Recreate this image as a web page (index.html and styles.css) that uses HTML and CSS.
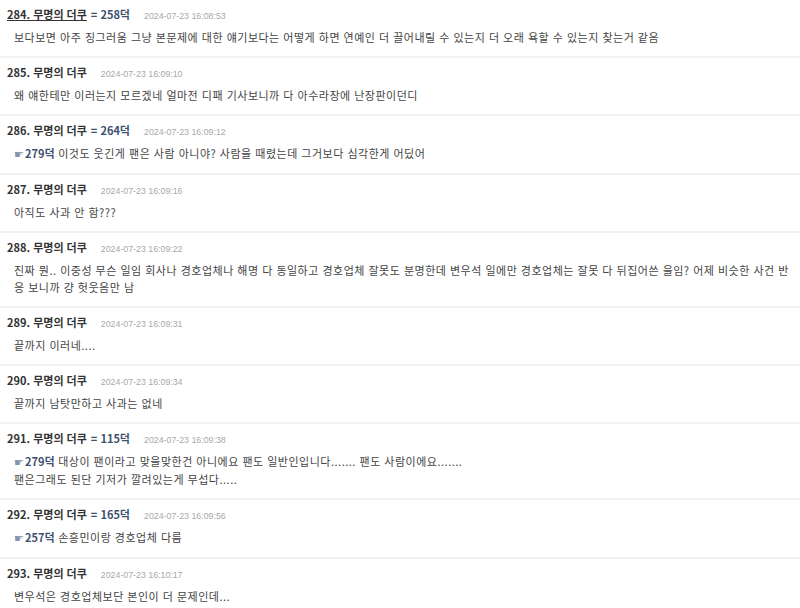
FILE: index.html
```html
<!DOCTYPE html>
<html lang="ko">
<head>
<meta charset="utf-8">
<link rel="stylesheet" href="styles.css">
</head>
<body>
<ul class="comments">
  <li class="comment">
    <div class="head"><span class="name hover">284. 무명의 더쿠</span><span class="ref">= 258덕</span><span class="date">2024-07-23 16:08:53</span></div>
    <div class="body">보다보면 아주 징그러움 그냥 본문제에 대한 얘기보다는 어떻게 하면 연예인 더 끌어내릴 수 있는지 더 오래 욕할 수 있는지 찾는거 같음</div>
  </li>
  <li class="comment">
    <div class="head"><span class="name">285. 무명의 더쿠</span><span class="date">2024-07-23 16:09:10</span></div>
    <div class="body">왜 얘한테만 이러는지 모르겠네 얼마전 디패 기사보니까 다 아수라장에 난장판이던디</div>
  </li>
  <li class="comment">
    <div class="head"><span class="name">286. 무명의 더쿠</span><span class="ref">= 264덕</span><span class="date">2024-07-23 16:09:12</span></div>
    <div class="body"><span class="hand">☛</span><b class="reply">279덕</b> 이것도 웃긴게 팬은 사람 아니야? 사람을 때렸는데 그거보다 심각한게 어딨어</div>
  </li>
  <li class="comment">
    <div class="head"><span class="name">287. 무명의 더쿠</span><span class="date">2024-07-23 16:09:16</span></div>
    <div class="body">아직도 사과 안 함???</div>
  </li>
  <li class="comment">
    <div class="head"><span class="name">288. 무명의 더쿠</span><span class="date">2024-07-23 16:09:22</span></div>
    <div class="body">진짜 뭔.. 이중성 무슨 일임 회사나 경호업체나 해명 다 동일하고 경호업체 잘못도 분명한데 변우석 일에만 경호업체는 잘못 다 뒤집어쓴 을임? 어제 비슷한 사건 반응 보니까 걍 헛웃음만 남</div>
  </li>
  <li class="comment">
    <div class="head"><span class="name">289. 무명의 더쿠</span><span class="date">2024-07-23 16:09:31</span></div>
    <div class="body">끝까지 이러네....</div>
  </li>
  <li class="comment">
    <div class="head"><span class="name">290. 무명의 더쿠</span><span class="date">2024-07-23 16:09:34</span></div>
    <div class="body">끝까지 남탓만하고 사과는 없네</div>
  </li>
  <li class="comment">
    <div class="head"><span class="name">291. 무명의 더쿠</span><span class="ref">= 115덕</span><span class="date">2024-07-23 16:09:38</span></div>
    <div class="body"><span class="hand">☛</span><b class="reply">279덕</b> 대상이 팬이라고 맞을맞한건 아니에요 팬도 일반인입니다....... 팬도 사람이에요.......<br>팬은그래도 된단 기저가 깔려있는게 무섭다.....</div>
  </li>
  <li class="comment">
    <div class="head"><span class="name">292. 무명의 더쿠</span><span class="ref">= 165덕</span><span class="date">2024-07-23 16:09:56</span></div>
    <div class="body"><span class="hand">☛</span><b class="reply">257덕</b> 손흥민이랑 경호업체 다름</div>
  </li>
  <li class="comment">
    <div class="head"><span class="name">293. 무명의 더쿠</span><span class="date">2024-07-23 16:10:17</span></div>
    <div class="body">변우석은 경호업체보단 본인이 더 문제인데...</div>
  </li>
</ul>
</body>
</html>
```

FILE: styles.css
```css
html, body {
  margin: 0;
  padding: 0;
  background: #ffffff;
}

body {
  font-family: "Noto Sans CJK KR", "Noto Sans", sans-serif;
  color: #333;
}

.comments {
  list-style: none;
  margin: 0;
  padding: 0;
}

.comment {
  padding: 6px 0 10px;
  border-bottom: 2px solid #f2f2f2;
}

.head {
  display: flex;
  align-items: baseline;
  padding-left: 7px;
  height: 16px;
  line-height: 16px;
}

.name {
  font-size: 11px;
  font-weight: bold;
  color: #333;
}

.name.hover {
  text-decoration: underline;
}

.ref {
  font-size: 11px;
  font-weight: bold;
  color: #3d5170;
  margin-left: 4px;
}

.date {
  font-family: "Liberation Sans", sans-serif;
  font-size: 8.8px;
  color: #a8a8a8;
  margin-left: 14px;
}

.body {
  margin-top: 7px;
  padding-left: 14px;
  padding-right: 8px;
  font-size: 11px;
  line-height: 17px;
  letter-spacing: 0.5px;
  color: #444;
}

.hand {
  display: inline-block;
  width: 11px;
  color: #8593ac;
  font-family: "DejaVu Sans", sans-serif;
  font-size: 11px;
  letter-spacing: 0;
}

.reply {
  color: #3d5170;
  font-weight: bold;
  letter-spacing: 0;
}
```
